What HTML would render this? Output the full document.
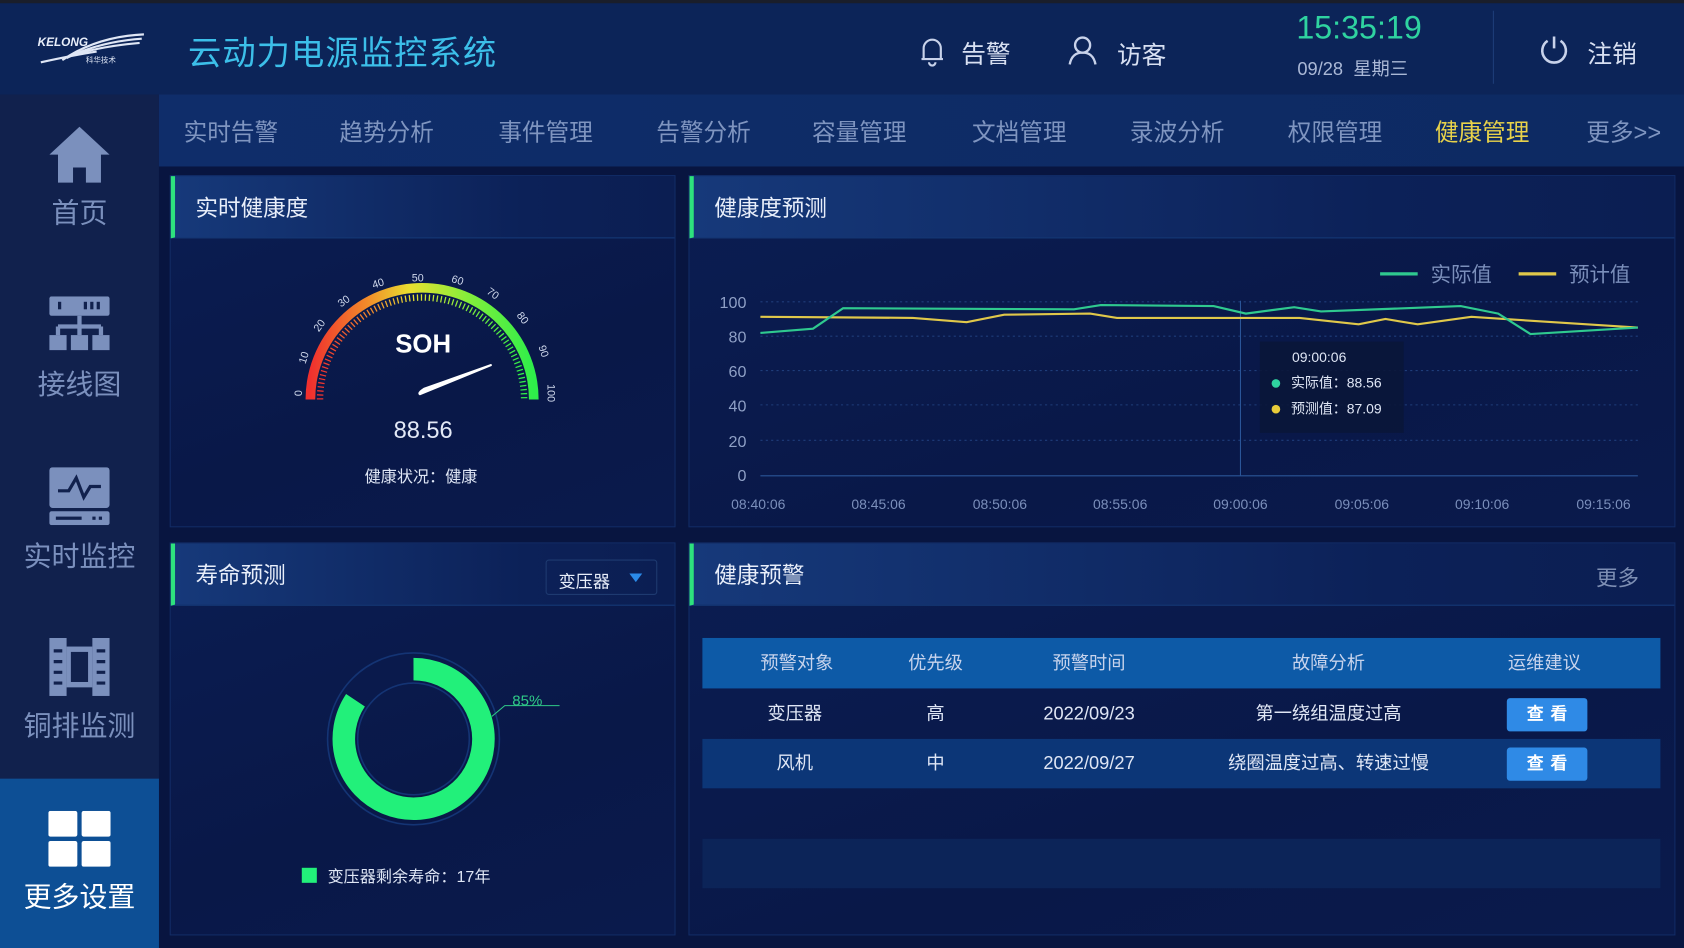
<!DOCTYPE html>
<html><head><meta charset="utf-8">
<style>
html,body{margin:0;padding:0;background:#081540;overflow:hidden;width:1684px;height:948px}
#w{position:absolute;left:0;top:0;width:1568px;height:883px;transform:scale(1.074);transform-origin:0 0;font-family:"Liberation Sans","Noto Sans CJK SC",sans-serif;background:#081540;color:#dfe6f5}
.a{position:absolute}
.hdr{left:0;top:0;width:1568px;height:88px;background:#0c2458;border-top:3px solid #1a1e2a;box-sizing:border-box}
.side{left:0;top:88px;width:148px;height:795px;background:#11214d}
.nav{left:148px;top:88px;width:1420px;height:67px;background:linear-gradient(90deg,#0f2d6a,#0d2a62)}
.nav span{position:absolute;top:18px;font-size:22px;color:#7f95c0}
.si{position:absolute;left:0;width:148px;text-align:center;font-size:26px;color:#7b90bd}
.panel{background:linear-gradient(160deg,#0b1d52,#091848 60%,#0a1a4c);border:1px solid #122c66;box-sizing:border-box}
.ph{position:absolute;left:0;top:0;right:0;height:57px;background:linear-gradient(90deg,#16397a,#0c2158 70%,#0b1e52);border-left:4px solid #2ee27e;border-bottom:1px solid #153a78}
.ph b{position:absolute;left:19px;top:14px;font-size:21px;font-weight:normal;color:#e8eefa}
.th{position:absolute;top:0;font-size:17px;line-height:22px;height:22px;color:#c7d3ec;transform:translateX(-50%);white-space:nowrap}
.btn{position:absolute;left:1403px;width:75px;height:31px;background:#2f8ae6;border-radius:3px;color:#fff;font-size:16px;text-align:center;line-height:31px;font-weight:bold;letter-spacing:6px;text-indent:6px}
</style></head><body><div id="w">
<div class="a hdr"></div>
<svg class="a" style="left:30px;top:26px" width="110" height="40" viewBox="0 0 110 40">
<text x="5" y="17" font-family="Liberation Sans" font-style="italic" font-weight="bold" font-size="11" fill="#e8eefa">KELONG</text>
<g stroke="#dfe6f5" stroke-width="2" fill="none"><path d="M28 30 Q60 8 104 6"/><path d="M32 28 Q62 13 102 10"/><path d="M36 26 Q64 17 100 14"/><path d="M8 32 Q40 25 60 22"/></g>
<text x="50" y="32" font-size="7" fill="#dfe6f5" font-family="Noto Sans CJK SC">科华技术</text>
</svg>
<div class="a" style="left:175px;top:24px;font-size:31px;color:#3cbfe9;letter-spacing:1px">云动力电源监控系统</div>
<svg class="a" style="left:855px;top:33px" width="26" height="30" viewBox="0 0 26 30"><path d="M5 22 V12 a8 8 0 0 1 16 0 V22 Z M3 22 H23 M10 25 a3 3 0 0 0 6 0" fill="none" stroke="#c8d2ea" stroke-width="2"/></svg>
<div class="a" style="left:895px;top:31px;font-size:23px;color:#d8e0f2">告警</div>
<svg class="a" style="left:993px;top:32px" width="30" height="30" viewBox="0 0 30 30"><circle cx="15" cy="10" r="7" fill="none" stroke="#c8d2ea" stroke-width="2.2"/><path d="M3 28 Q5 17 15 17 Q25 17 27 28" fill="none" stroke="#c8d2ea" stroke-width="2.2"/></svg>
<div class="a" style="left:1040px;top:32px;font-size:23px;color:#d8e0f2">访客</div>
<div class="a" style="left:1207px;top:10px;font-size:30px;color:#2fd3a0">15:35:19</div>
<div class="a" style="left:1208px;top:50px;font-size:17px;color:#aab8d6">09/28&nbsp; 星期三</div>
<div class="a" style="left:1390px;top:10px;width:1px;height:68px;background:#1d3d78"></div>
<svg class="a" style="left:1432px;top:31px" width="30" height="30" viewBox="0 0 30 30"><path d="M9 7 A11 11 0 1 0 21 7" fill="none" stroke="#c8d2ea" stroke-width="2.4"/><path d="M15 3 V14" stroke="#c8d2ea" stroke-width="2.4"/></svg>
<div class="a" style="left:1478px;top:31px;font-size:23px;color:#d8e0f2">注销</div>

<div class="a side">
<svg class="a" style="left:44px;top:28px" width="60" height="56" viewBox="0 0 60 56"><path d="M30 2 L58 28 L50 28 L50 54 L36 54 L36 40 L24 40 L24 54 L10 54 L10 28 L2 28 Z" fill="#7b90bd"/></svg>
<div class="si" style="top:90px">首页</div>
<svg class="a" style="left:44px;top:188px" width="60" height="52" viewBox="0 0 60 52"><rect x="2" y="0" width="56" height="18" rx="2" fill="#7b90bd"/><rect x="10" y="5" width="3" height="7" fill="#11214d"/><rect x="34" y="5" width="3" height="7" fill="#11214d"/><rect x="40" y="5" width="3" height="7" fill="#11214d"/><rect x="46" y="5" width="3" height="7" fill="#11214d"/><path d="M30 18 V28 M10 28 H50 M10 28 V36 M30 28 V36 M50 28 V36" stroke="#7b90bd" stroke-width="4"/><rect x="2" y="36" width="16" height="14" fill="#7b90bd"/><rect x="22" y="36" width="16" height="14" fill="#7b90bd"/><rect x="42" y="36" width="16" height="14" fill="#7b90bd"/></svg>
<div class="si" style="top:250px">接线图</div>
<svg class="a" style="left:44px;top:347px" width="60" height="54" viewBox="0 0 60 54"><rect x="2" y="0" width="56" height="38" rx="3" fill="#7b90bd"/><path d="M10 22 H20 L27 10 L34 28 L40 18 H50" fill="none" stroke="#11214d" stroke-width="3"/><rect x="2" y="41" width="56" height="13" rx="2" fill="#7b90bd"/><rect x="8" y="46" width="24" height="3" fill="#11214d"/><rect x="42" y="46" width="3" height="3" fill="#11214d"/><rect x="48" y="46" width="3" height="3" fill="#11214d"/></svg>
<div class="si" style="top:410px">实时监控</div>
<svg class="a" style="left:44px;top:506px" width="60" height="54" viewBox="0 0 60 54"><rect x="2" y="0" width="16" height="54" fill="#7b90bd"/><rect x="42" y="0" width="16" height="54" fill="#7b90bd"/><rect x="18" y="8" width="24" height="38" fill="#7b90bd"/><rect x="22" y="13" width="16" height="28" fill="#11214d"/><g stroke="#11214d" stroke-width="3"><path d="M6 12H14M6 22H14M6 32H14M6 42H14M46 12H54M46 22H54M46 32H54M46 42H54"/></g></svg>
<div class="si" style="top:568px">铜排监测</div>
<div class="a" style="left:0;top:637px;width:148px;height:158px;background:#0d4f95"></div>
<svg class="a" style="left:45px;top:667px" width="58" height="52" viewBox="0 0 58 52"><rect x="0" y="0" width="27" height="24" rx="2" fill="#fff"/><rect x="31" y="0" width="27" height="24" rx="2" fill="#fff"/><rect x="0" y="28" width="27" height="24" rx="2" fill="#fff"/><rect x="31" y="28" width="27" height="24" rx="2" fill="#fff"/></svg>
<div class="si" style="top:727px;color:#fff">更多设置</div>
</div>

<div class="a nav">
<span style="left:23px">实时告警</span><span style="left:168px">趋势分析</span><span style="left:316px">事件管理</span><span style="left:463px">告警分析</span><span style="left:608px">容量管理</span><span style="left:757px">文档管理</span><span style="left:904px">录波分析</span><span style="left:1051px">权限管理</span><span style="left:1188px;color:#e8d24a">健康管理</span><span style="left:1329px">更多&gt;&gt;</span>
</div>

<div class="a panel" style="left:158px;top:163px;width:471px;height:328px"><div class="ph"><b>实时健康度</b></div></div>
<svg class="a" style="left:260px;top:240px" width="280" height="220" viewBox="260 240 280 220">
<defs><linearGradient id="gg" x1="0" x2="1" y1="0" y2="0"><stop offset="0" stop-color="#f0302e"/><stop offset="0.25" stop-color="#f28a2a"/><stop offset="0.45" stop-color="#e8e030"/><stop offset="0.7" stop-color="#86ee3a"/><stop offset="1" stop-color="#2eee4a"/></linearGradient></defs>
<path d="M289 372 A104 104 0 0 1 497 372" fill="none" stroke="url(#gg)" stroke-width="9"/>
<path d="M298 372 A95 95 0 0 1 488 372" fill="none" stroke="url(#gg)" stroke-width="6" stroke-dasharray="1.2 2.5"/>
<g font-size="10" fill="#cfd8ec" text-anchor="middle">
<text transform="translate(281,366) rotate(-90)">0</text><text transform="translate(286,334) rotate(-72)">10</text><text transform="translate(300,305) rotate(-54)">20</text><text transform="translate(322,283) rotate(-36)">30</text><text transform="translate(353,267) rotate(-18)">40</text><text x="389" y="262">50</text><text transform="translate(425,264) rotate(18)">60</text><text transform="translate(457,276) rotate(36)">70</text><text transform="translate(484,298) rotate(54)">80</text><text transform="translate(503,328) rotate(72)">90</text><text transform="translate(510,366) rotate(90)">100</text>
</g>
<text x="394" y="328" font-size="24" font-weight="bold" fill="#fff" text-anchor="middle">SOH</text>
<path d="M391 367 L457 340 L395 362 Q389 366 391 367 Z" fill="#fff" stroke="#fff" stroke-width="2" stroke-linejoin="round"/>
<text x="394" y="408" font-size="22" fill="#e3e9f6" text-anchor="middle">88.56</text>
<text x="392" y="449" font-size="15" fill="#dfe6f5" text-anchor="middle" font-family="Liberation Sans,Noto Sans CJK SC">健康状况：健康</text>
</svg>

<div class="a panel" style="left:641px;top:163px;width:919px;height:328px"><div class="ph"><b>健康度预测</b></div></div>
<svg class="a" style="left:641px;top:230px" width="919" height="260" viewBox="641 230 919 260" font-family="Liberation Sans,Noto Sans CJK SC">
<path d="M1285 255 H1320" stroke="#2fc98f" stroke-width="3"/><text x="1332" y="262" font-size="19" fill="#7b8fbb">实际值</text>
<path d="M1414 255 H1449" stroke="#e0c84a" stroke-width="3"/><text x="1461" y="262" font-size="19" fill="#7b8fbb">预计值</text>
<g stroke="#1f3d7a" stroke-dasharray="2 3"><path d="M708 281H1525M708 313H1525M708 345H1525M708 377H1525M708 410H1525"/></g>
<path d="M708 443H1525" stroke="#2a5598"/>
<path d="M1155 280V443" stroke="#2a5598"/>
<g font-size="15" fill="#8fa0c6" text-anchor="end"><text x="695" y="287">100</text><text x="695" y="319">80</text><text x="695" y="351">60</text><text x="695" y="383">40</text><text x="695" y="416">20</text><text x="695" y="448">0</text></g>
<g font-size="13" fill="#7b8fbb" text-anchor="middle"><text x="706" y="474">08:40:06</text><text x="818" y="474">08:45:06</text><text x="931" y="474">08:50:06</text><text x="1043" y="474">08:55:06</text><text x="1155" y="474">09:00:06</text><text x="1268" y="474">09:05:06</text><text x="1380" y="474">09:10:06</text><text x="1493" y="474">09:15:06</text></g>
<polyline fill="none" stroke="#e0c84a" stroke-width="2" points="708,295 850,296 900,300 935,293 1015,292 1040,296 1210,296 1265,302 1290,297 1320,302 1370,295 1400,297 1525,305"/>
<polyline fill="none" stroke="#2fc98f" stroke-width="2" points="708,310 757,306 785,287 1000,288 1025,284 1130,285 1160,292 1205,286 1230,290 1360,285 1395,292 1425,311 1525,305"/>
<rect x="1173" y="318" width="134" height="85" fill="#0a1638" opacity="0.9"/>
<text x="1203" y="337" font-size="13" fill="#dfe6f5">09:00:06</text>
<circle cx="1188" cy="357" r="4" fill="#2fd3a0"/><text x="1202" y="361" font-size="13" fill="#dfe6f5">实际值：88.56</text>
<circle cx="1188" cy="381" r="4" fill="#e8cc3a"/><text x="1202" y="385" font-size="13" fill="#dfe6f5">预测值：87.09</text>
</svg>

<div class="a panel" style="left:158px;top:505px;width:471px;height:366px"><div class="ph"><b>寿命预测</b></div>
<div class="a" style="left:349px;top:15px;width:104px;height:33px;border:1px solid #1e3a70;border-radius:3px;box-sizing:border-box"><span class="a" style="left:11px;top:6px;font-size:16px;color:#e8eefa">变压器</span><svg class="a" style="left:77px;top:12px" width="12" height="8"><path d="M0 0H12L6 8Z" fill="#2a8ae8"/></svg></div>
</div>
<svg class="a" style="left:270px;top:595px" width="270" height="240" viewBox="270 595 270 240" font-family="Liberation Sans,Noto Sans CJK SC">
<circle cx="385" cy="688" r="80" fill="none" stroke="#143474" stroke-width="1.5"/>
<circle cx="385" cy="688" r="52" fill="none" stroke="#143474" stroke-width="1.5"/>
<path d="M385 623 A65 65 0 1 1 331 652" fill="none" stroke="#22f07a" stroke-width="21"/>
<path d="M458 667 L470 657 H521" fill="none" stroke="#2fc987" stroke-width="1"/>
<text x="477" y="657" font-size="14" fill="#2fc987">85%</text>
<rect x="281" y="808" width="14" height="14" fill="#22f07a"/>
<text x="305" y="821" font-size="15" fill="#dfe6f5">变压器剩余寿命：17年</text>
</svg>

<div class="a panel" style="left:641px;top:505px;width:919px;height:366px"><div class="ph"><b>健康预警</b><span class="a" style="right:33px;top:16px;font-size:20px;color:#7e8fb4">更多</span></div></div>
<div class="a" style="left:654px;top:594px;width:892px;height:47px;background:#0d5aa7"></div>
<div class="a" style="left:654px;top:688px;width:892px;height:46px;background:#0c3677"></div>
<div class="a" style="left:654px;top:781px;width:892px;height:46px;background:#0c2458"></div>
<div class="a" style="left:0;top:607px;width:1568px">
<div class="th" style="left:742px">预警对象</div><div class="th" style="left:871px">优先级</div><div class="th" style="left:1014px">预警时间</div><div class="th" style="left:1237px">故障分析</div><div class="th" style="left:1438px">运维建议</div></div>
<div class="a" style="left:0;top:654px;width:1568px">
<div class="th" style="left:740px;color:#dfe6f5">变压器</div><div class="th" style="left:871px;color:#dfe6f5">高</div><div class="th" style="left:1014px;color:#dfe6f5">2022/09/23</div><div class="th" style="left:1237px;color:#dfe6f5">第一绕组温度过高</div></div>
<div class="a" style="left:0;top:700px;width:1568px">
<div class="th" style="left:740px;color:#dfe6f5">风机</div><div class="th" style="left:871px;color:#dfe6f5">中</div><div class="th" style="left:1014px;color:#dfe6f5">2022/09/27</div><div class="th" style="left:1237px;color:#dfe6f5">绕圈温度过高、转速过慢</div></div>
<div class="btn" style="top:650px">查看</div>
<div class="btn" style="top:696px">查看</div>
</div></body></html>
